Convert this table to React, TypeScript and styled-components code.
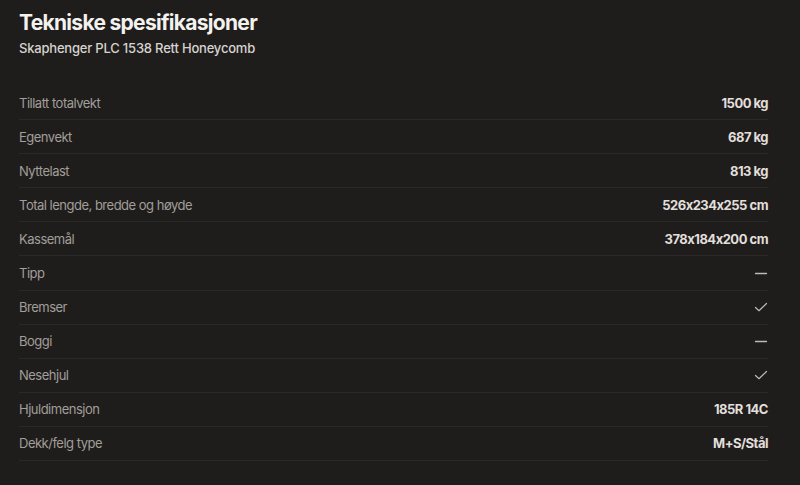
import React from "react";
import styled, { createGlobalStyle } from "styled-components";

const Global = createGlobalStyle`
  html, body { margin: 0; padding: 0; background: #1f1d1c; }
  body {
    font-family: Inter, "Noto Sans", sans-serif;
    font-feature-settings: "calt" 0;
    -webkit-font-smoothing: antialiased;
  }
`;

const Page = styled.div`
  width: 800px;
  height: 485px;
  box-sizing: border-box;
  padding: 10px 32px 0 19px;
  background: #1f1d1c;
  overflow: hidden;
`;

const Title = styled.h1`
  margin: 0;
  font-size: 21px;
  line-height: 26px;
  font-weight: 700;
  letter-spacing: -0.7px;
  color: #f4f2ef;
`;

const Subtitle = styled.div`
  margin-top: 3px;
  font-size: 13px;
  line-height: 18px;
  font-weight: 500;
  letter-spacing: -0.2px;
  color: #d6d3cf;
`;

const Table = styled.div`
  margin-top: 29px;
  display: flex;
  flex-direction: column;
`;

const Row = styled.div`
  display: flex;
  align-items: center;
  justify-content: space-between;
  height: 34.1px;
  box-sizing: border-box;
  border-bottom: 1px solid #2b2928;
`;

const Label = styled.span`
  font-size: 13px;
  font-weight: 400;
  letter-spacing: -0.5px;
  color: #a29e99;
`;

const Value = styled.span`
  font-size: 13px;
  font-weight: 700;
  letter-spacing: -0.5px;
  color: #e2dfdb;
`;

const IconWrap = styled.span`
  display: flex;
  align-items: center;
  color: #bdb9b4;
`;

const Dash = () => (
  <svg width="14" height="14" viewBox="0 0 14 14" fill="none">
    <path d="M1.5 7.5h11" stroke="currentColor" strokeWidth="1.3" strokeLinecap="round" />
  </svg>
);

const Check = () => (
  <svg width="14" height="14" viewBox="0 0 14 14" fill="none">
    <path d="M1.5 7.5l3.5 3.2L12.5 3.5" stroke="currentColor" strokeWidth="1.2" strokeLinecap="round" strokeLinejoin="round" />
  </svg>
);

type Spec = { label: string; value?: string; icon?: "dash" | "check" };

const specs: Spec[] = [
  { label: "Tillatt totalvekt", value: "1500 kg" },
  { label: "Egenvekt", value: "687 kg" },
  { label: "Nyttelast", value: "813 kg" },
  { label: "Total lengde, bredde og høyde", value: "526x234x255 cm" },
  { label: "Kassemål", value: "378x184x200 cm" },
  { label: "Tipp", icon: "dash" },
  { label: "Bremser", icon: "check" },
  { label: "Boggi", icon: "dash" },
  { label: "Nesehjul", icon: "check" },
  { label: "Hjuldimensjon", value: "185R 14C" },
  { label: "Dekk/felg type", value: "M+S/Stål" },
];

export default function App() {
  return (
    <Page>
      <Global />
      <Title>Tekniske spesifikasjoner</Title>
      <Subtitle>Skaphenger PLC 1538 Rett Honeycomb</Subtitle>
      <Table>
        {specs.map((s) => (
          <Row key={s.label}>
            <Label>{s.label}</Label>
            {s.icon ? (
              <IconWrap>{s.icon === "dash" ? <Dash /> : <Check />}</IconWrap>
            ) : (
              <Value>{s.value}</Value>
            )}
          </Row>
        ))}
      </Table>
    </Page>
  );
}
